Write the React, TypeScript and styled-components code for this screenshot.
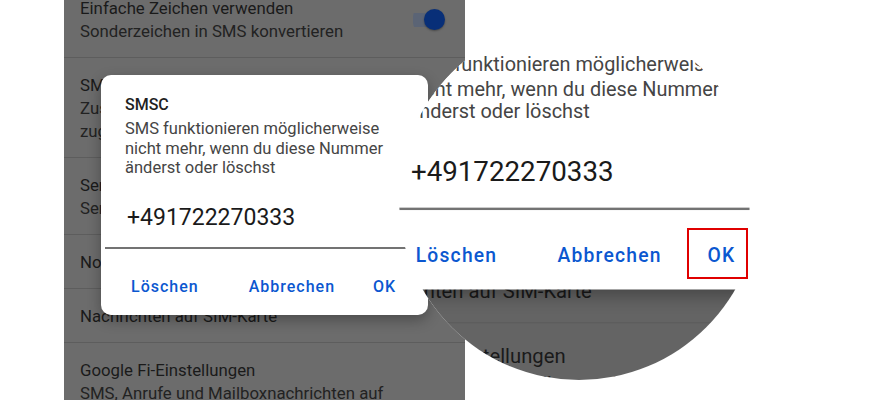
import React from "react";
import styled, { createGlobalStyle } from "styled-components";

const GlobalStyle = createGlobalStyle`
  html, body {
    margin: 0;
    padding: 0;
    background: #ffffff;
  }
  body {
    font-family: Roboto, "Noto Sans", sans-serif;
  }
`;

const Page = styled.div`
  position: relative;
  width: 879px;
  height: 400px;
  box-sizing: border-box;
  padding-left: 64px;
  overflow: hidden;
  background: #ffffff;
`;

const Screen = styled.div<{ $bg: string }>`
  position: relative;
  width: 401px;
  height: 400px;
  overflow: hidden;
  background: ${p => p.$bg};
`;

const SettingsList = styled.ul`
  list-style: none;
  margin: -19px 0 0;
  padding: 0;
`;

const SettingRow = styled.li`
  display: flex;
  align-items: center;
  padding: 16px 20px 15px 16px;
  border-bottom: 1px solid #5d5d5d;
`;

const RowText = styled.div`
  flex: 1;
  max-width: 322px;
`;

const RowTitle = styled.div`
  font-size: 16.8px;
  line-height: 22px;
  color: #1a1a1a;
`;

const RowSummary = styled.div`
  padding-top: 1px;
  font-size: 16.8px;
  line-height: 22px;
  color: #222222;
`;

const Toggle = styled.div`
  margin-left: auto;
  width: 32px;
  height: 21px;
  display: flex;
  align-items: center;
  justify-content: flex-end;
  background: linear-gradient(#5b6475, #5b6475) left center / 30px 14px no-repeat;
  border-radius: 7px;
`;

const ToggleThumb = styled.span`
  width: 21px;
  height: 21px;
  border-radius: 50%;
  background: #082f78;
  box-shadow: 0 1px 2px rgba(0, 0, 0, 0.35);
`;

const Dialog = styled.div`
  position: absolute;
  left: 37px;
  top: 75px;
  width: 327px;
  box-sizing: border-box;
  padding: 20px 20px 7px 24px;
  display: flex;
  flex-direction: column;
  background: #ffffff;
  border-radius: 10px;
  box-shadow: 0 5px 14px rgba(0, 0, 0, 0.3);
`;

const DialogTitle = styled.h2`
  margin: 0;
  font-size: 16px;
  font-weight: 500;
  line-height: 20px;
  color: #1f1f1f;
`;

const DialogBody = styled.p`
  margin: 4px 0 0;
  font-size: 16.5px;
  line-height: 19.5px;
  color: #454545;
`;

const NumberField = styled.div`
  margin: 26px 0 0 -20px;
  padding: 0 0 15px 22px;
  border-bottom: 2px solid #737373;
  font-size: 23px;
  line-height: 28px;
  color: #1a1a1a;
`;

const DialogActions = styled.div`
  display: flex;
  align-items: center;
  gap: 12px;
  margin: 17px 0 0 -7px;
`;

const Spacer = styled.div`
  flex: 1;
`;

const ActionButton = styled.button`
  padding: 11px 13px;
  border: 0;
  background: transparent;
  font-family: Roboto, "Noto Sans", sans-serif;
  font-size: 16px;
  font-weight: 500;
  letter-spacing: 1px;
  line-height: 20px;
  color: #0b57d0;
`;

const Lens = styled.div`
  position: absolute;
  left: 399px;
  top: 20px;
  width: 360px;
  height: 360px;
  border-radius: 50%;
  overflow: hidden;
  background: #ffffff;
`;

const LensContent = styled.div<{ $scale: number }>`
  position: absolute;
  left: -63.7px;
  top: -110.2px;
  transform-origin: 0 0;
  transform: scale(${p => p.$scale});
`;

/* red marker drawn over the magnified OK button */
const Callout = styled.div`
  position: absolute;
  left: 687px;
  top: 228px;
  width: 61px;
  height: 51px;
  box-sizing: border-box;
  border: 2px solid #e00000;
`;

const settings = [
  { title: "Einfache Zeichen verwenden", summary: ["Sonderzeichen in SMS konvertieren"], toggle: true },
  { title: "SMS-Zustellberichte", summary: ["Zustellbericht für jede SMS anfordern,", "zugestellte SMS werden markiert"] },
  { title: "Service-Nachrichten", summary: ["Service-Nachrichten empfangen"] },
  { title: "Notfallbenachrichtigungen" },
  { title: "Nachrichten auf SIM-Karte" },
  { title: "Google Fi-Einstellungen", summary: ["SMS, Anrufe und Mailboxnachrichten auf allen Geräten"] },
];

const PhoneScreen = ({ bg }: { bg: string }) => (
  <Screen $bg={bg}>
    <SettingsList>
      {settings.map(s => (
        <SettingRow key={s.title}>
          <RowText>
            <RowTitle>{s.title}</RowTitle>
            {s.summary?.map(line => (
              <RowSummary key={line}>{line}</RowSummary>
            ))}
          </RowText>
          {s.toggle && (
            <Toggle>
              <ToggleThumb />
            </Toggle>
          )}
        </SettingRow>
      ))}
    </SettingsList>
    <Dialog>
      <DialogTitle>SMSC</DialogTitle>
      <DialogBody>
        SMS funktionieren möglicherweise
        <br />
        nicht mehr, wenn du diese Nummer
        <br />
        änderst oder löschst
      </DialogBody>
      <NumberField>+491722270333</NumberField>
      <DialogActions>
        <ActionButton>Löschen</ActionButton>
        <Spacer />
        <ActionButton>Abbrechen</ActionButton>
        <ActionButton>OK</ActionButton>
      </DialogActions>
    </Dialog>
  </Screen>
);

export default function App() {
  return (
    <>
      <GlobalStyle />
      <Page>
        <PhoneScreen bg="#6c6c6c" />
        <Lens aria-hidden="true">
          <LensContent $scale={1.205}>
            <PhoneScreen bg="#646464" />
          </LensContent>
        </Lens>
        <Callout />
      </Page>
    </>
  );
}
